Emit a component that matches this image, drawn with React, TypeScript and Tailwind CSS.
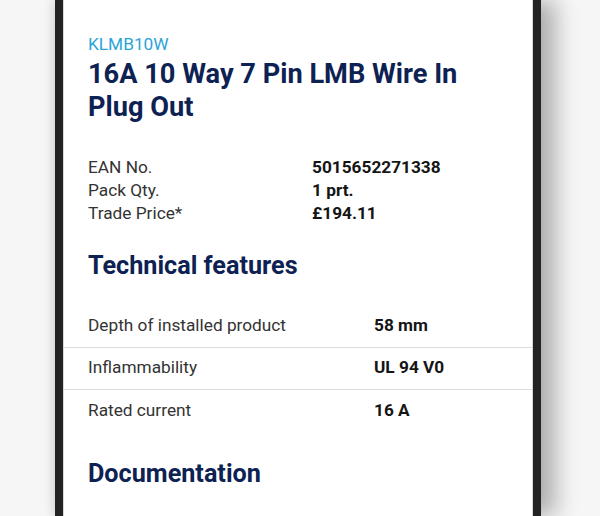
import React from 'react';

const info = [
  { label: 'EAN No.', value: '5015652271338' },
  { label: 'Pack Qty.', value: '1 prt.' },
  { label: 'Trade Price*', value: '£194.11' },
];

const features = [
  { label: 'Depth of installed product', value: '58 mm' },
  { label: 'Inflammability', value: 'UL 94 V0' },
  { label: 'Rated current', value: '16 A' },
];

const App: React.FC = () => {
  return (
    <div
      className="w-[600px] h-[516px] overflow-hidden bg-[#f6f6f6] pl-[55px]"
      style={{ fontFamily: 'Roboto, "Noto Sans", sans-serif' }}
    >
      {/* Phone */}
      <div className="w-[486px] h-full border-x-[8px] border-[#232323] bg-white shadow-[14px_0_22px_rgba(0,0,0,0.3),-4px_0_8px_rgba(0,0,0,0.08)]">
        <div className="h-full border-x border-[#d8d8d8]">
          <div className="px-[24px] pt-[32px]">
            <div className="text-[17.25px] leading-[24px] text-[#2aa5d8]">KLMB10W</div>
            <h1 className="mt-[2px] max-w-[400px] text-[27.2px] leading-[33px] font-bold text-[#0d2253]">
              16A 10 Way 7 Pin LMB Wire In Plug Out
            </h1>

            {/* Product info */}
            <div className="mt-[32px] text-[17.25px] leading-[23px]">
              {info.map((row) => (
                <div key={row.label} className="flex">
                  <span className="w-[224px] text-[#333333]">{row.label}</span>
                  <span className="font-bold text-[#151515]">{row.value}</span>
                </div>
              ))}
            </div>

            <h2 className="mt-[25px] text-[25.2px] leading-[32px] font-bold text-[#0d2253]">
              Technical features
            </h2>
          </div>

          {/* Technical features table */}
          <div className="mt-[23px]">
            {features.map((row, i) => (
              <div
                key={row.label}
                className={`flex items-center h-[42.5px] px-[24px] text-[17.25px] ${
                  i < features.length - 1 ? 'border-b border-[#dcdcdc]' : ''
                }`}
              >
                <span className="w-[286px] text-[#333333]">{row.label}</span>
                <span className="font-bold text-[#151515]">{row.value}</span>
              </div>
            ))}
          </div>

          <div className="px-[24px] mt-[25px]">
            <h2 className="text-[25.2px] leading-[32px] font-bold text-[#0d2253]">Documentation</h2>
          </div>
        </div>
      </div>
    </div>
  );
};

export default App;
